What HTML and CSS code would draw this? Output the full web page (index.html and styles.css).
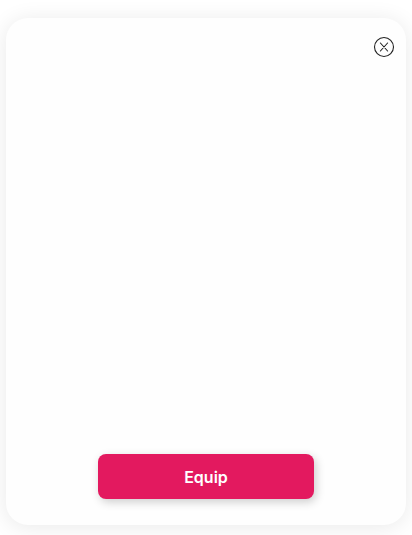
FILE: index.html
```html
<!DOCTYPE html>
<html lang="en">
<head>
<meta charset="utf-8">
<meta name="viewport" content="width=device-width, initial-scale=1">
<title>Equip</title>
<link rel="stylesheet" href="styles.css">
</head>
<body>
<main class="card" role="dialog" aria-label="Equip item">
  <button class="close" type="button" aria-label="Close">
    <svg viewBox="0 0 22 22" width="22" height="22" fill="none" stroke="currentColor" stroke-width="1.1" aria-hidden="true">
      <circle cx="11" cy="11" r="9.5"/>
      <path d="M7.4 7l7.2 8M14.6 7l-7.2 8" stroke-linecap="round"/>
    </svg>
  </button>
  <button class="equip" type="button">Equip</button>
</main>
</body>
</html>
```
FILE: styles.css
```css
* {
  box-sizing: border-box;
}

body {
  margin: 0;
  min-height: 100vh;
  padding: 18px 6px 10px;
  display: flex;
  background: #fff;
  font-family: Inter, "Liberation Sans", sans-serif;
}

.card {
  flex: 1;
  display: flex;
  flex-direction: column;
  align-items: center;
  justify-content: space-between;
  padding: 18px 11px 26px;
  border-radius: 22px;
  background: #fefefe;
  box-shadow: 0 2px 22px rgba(0, 0, 0, 0.09);
}

button {
  padding: 0;
  border: 0;
  cursor: pointer;
}

.close {
  align-self: flex-end;
  display: flex;
  background: none;
  color: #222;
}

.equip {
  width: 216px;
  height: 45px;
  border-radius: 8px;
  background: #e3195f;
  box-shadow: 2px 3px 10px rgba(0, 0, 0, 0.2);
  color: #fff;
  font: 600 16px/24px Inter, "Liberation Sans", sans-serif;
}
```
